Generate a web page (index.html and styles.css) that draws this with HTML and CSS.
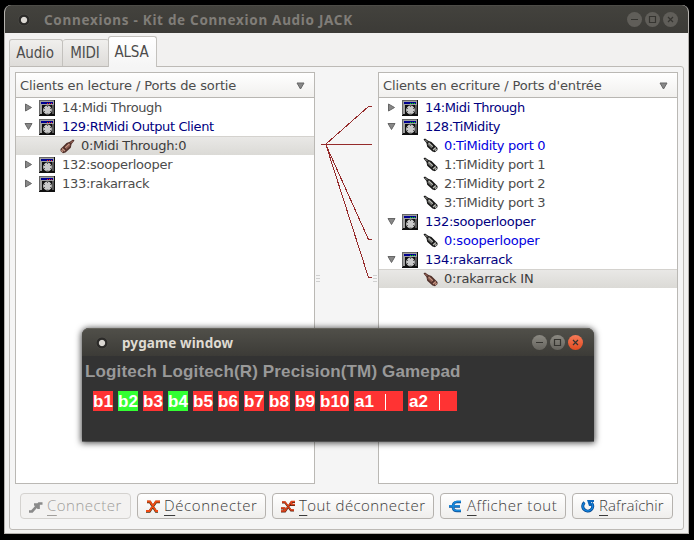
FILE: index.html
```html
<!DOCTYPE html>
<html lang="fr">
<head>
<meta charset="utf-8">
<title>Connexions - Kit de Connexion Audio JACK</title>
<link rel="stylesheet" href="styles.css">
</head>
<body>
<svg class="defs" width="0" height="0" aria-hidden="true">
  <defs>
    <symbol id="closed" viewBox="0 0 8 9"><path d="M1 1L7 4.5L1 8Z" fill="#888" stroke="#666" stroke-width="1"/></symbol>
    <symbol id="open" viewBox="0 0 9 8"><path d="M1 1H8L4.5 7Z" fill="#888" stroke="#666" stroke-width="1"/></symbol>
    <symbol id="device" viewBox="0 0 16 16">
      <path d="M0 0H16V16H0Z" fill="#101010"/>
      <path d="M0 0H15V1H1V15H0Z" fill="#666"/>
      <path d="M1 1H15V5H1ZM1 5H3V14H1ZM13.5 5H14.5V14H13.5Z" fill="#a0a0a0"/>
      <path d="M2 2H14V4H2Z" fill="#000090"/>
      <path d="M8 3H9V4H8ZM10 3H11V4H10ZM12 3H13V4H12Z" fill="currentColor"/>
      <circle cx="8.5" cy="10" r="4.4" fill="#cacaca"/>
      <path d="M7.5 13.5h2V15h-2z" fill="#555"/>
      <path d="M8 6h1v1H8zM5 8h1v1H5zM11 8h1v1h-1zM5 11h1v1H5zM11 11h1v1h-1z" fill="#555"/>
    </symbol>
    <symbol id="plug" viewBox="0 0 15 15">
      <path d="M.5 1.5L2 .5L5.2 2.8L8.5 4L14.5 10V12L12 14.3L9.5 13.6L4.2 8.8L3.4 5Z" class="plug-edge"/>
      <path d="M2 2L4.5 4M4.8 6L9 10" class="plug-mid"/>
      <path d="M5.5 4.8L9.8 8.8" class="plug-light"/>
      <path d="M10 12L12.8 9.6M12 12.8L13.6 11.2" class="plug-light"/>
    </symbol>
  </defs>
</svg>
<main class="window">
  <header class="titlebar"><i class="orb"></i><h1 class="caption">Connexions - Kit de Connexion Audio JACK</h1>
    <div class="controls">
      <svg class="ctl" viewBox="0 0 15 15"><path d="M4 7.5H11"/></svg>
      <svg class="ctl" viewBox="0 0 15 15"><path d="M4.5 4.5H10.5V10.5H4.5Z"/></svg>
      <svg class="ctl" viewBox="0 0 15 15"><path d="M5 5L10 10M10 5L5 10"/></svg>
    </div>
  </header>
  <nav class="tabs"><span class="tab audio"><b>Audio</b></span><span class="tab midi"><b>MIDI</b></span><span class="tab active"><b>ALSA</b></span></nav>
  <section class="pane">
    <div class="lists">
      <div class="list">
        <div class="head"><span class="h-out">Clients en lecture / Ports de sortie</span><svg class="sort"><use href="#open"/></svg></div>
        <div class="row wide"><svg class="arrow"><use href="#closed"/></svg><svg class="dev out"><use href="#device"/></svg><span>14:Midi Through</span></div>
        <div class="row wide navy"><svg class="arrow"><use href="#open"/></svg><svg class="dev out"><use href="#device"/></svg><span>129:RtMidi Output Client</span></div>
        <div class="row port selected"><svg class="plug brown flip"><use href="#plug"/></svg><span>0:Midi Through:0</span></div>
        <div class="row"><svg class="arrow"><use href="#closed"/></svg><svg class="dev out"><use href="#device"/></svg><span>132:sooperlooper</span></div>
        <div class="row"><svg class="arrow"><use href="#closed"/></svg><svg class="dev out"><use href="#device"/></svg><span>133:rakarrack</span></div>
      </div>
      <svg class="wires" viewBox="315 72 63 412">
        <g fill="none" stroke="#952b2b" shape-rendering="crispEdges"><path d="M321 144.5H372"/><path d="M326 144L368.5 106.5H372"/><path d="M326 145L368.5 239.5H372"/><path d="M326 145L368.5 277.5H372"/></g>
        <path d="M316 275.5h4M316 278.5h4M316 281.5h4M373 275.5h4M373 278.5h4M373 281.5h4" stroke="#d0d0d0"/>
      </svg>
      <div class="list">
        <div class="head"><span class="h-in">Clients en ecriture / Ports d'entrée</span><svg class="sort"><use href="#open"/></svg></div>
        <div class="row wide navy"><svg class="arrow"><use href="#closed"/></svg><svg class="dev in"><use href="#device"/></svg><span>14:Midi Through</span></div>
        <div class="row wide navy"><svg class="arrow"><use href="#open"/></svg><svg class="dev in"><use href="#device"/></svg><span>128:TiMidity</span></div>
        <div class="row port blue"><svg class="plug"><use href="#plug"/></svg><span>0:TiMidity port 0</span></div>
        <div class="row port"><svg class="plug"><use href="#plug"/></svg><span>1:TiMidity port 1</span></div>
        <div class="row port"><svg class="plug"><use href="#plug"/></svg><span>2:TiMidity port 2</span></div>
        <div class="row port"><svg class="plug"><use href="#plug"/></svg><span>3:TiMidity port 3</span></div>
        <div class="row navy"><svg class="arrow"><use href="#open"/></svg><svg class="dev in"><use href="#device"/></svg><span>132:sooperlooper</span></div>
        <div class="row port blue"><svg class="plug"><use href="#plug"/></svg><span class="loose">0:sooperlooper</span></div>
        <div class="row navy"><svg class="arrow"><use href="#open"/></svg><svg class="dev in"><use href="#device"/></svg><span>134:rakarrack</span></div>
        <div class="row port selected"><svg class="plug brown"><use href="#plug"/></svg><span class="loose">0:rakarrack IN</span></div>
      </div>
    </div>
    <footer class="actions">
      <button class="btn connect" disabled><svg class="ico" viewBox="0 0 14 13"><path d="M0 11.5H3L10 3.5H13.5M5 4.5H9.5V9" stroke="#8a8a8a" stroke-width="2.7"/></svg><span><u>C</u>onnecter</span></button>
      <button class="btn disconnect"><svg class="ico" viewBox="0 0 14 13"><path d="M1 2H4L10 11.5H12M0 11.5H3.5L10 2H14" stroke="#431" stroke-width="2.4"/><path d="M1 1.5H4L10 11H12M0 11H3.5L10 1.5H14" stroke="#f04a13" stroke-width="1.8"/></svg><span><u>D</u>éconnecter</span></button>
      <button class="btn all"><svg class="ico" viewBox="0 0 14 13"><path d="M1 2.5H4L10 10.5H13M0 11.5H4L10.5 2H14M0 8.5H3.5V11.5M14 5H10.5V2" stroke="#521" stroke-width="2"/><path d="M1 2H4L10 10H13M0 11H4L10.5 1.5H14M0 8H3.5V11M14 4.5H10.5V2" stroke="#e0421a" stroke-width="1.3"/></svg><span><u>T</u>out déconnecter</span></button>
      <button class="btn expand"><svg class="ico" viewBox="0 0 14 13"><path d="M0 6.5H11M12 2H8Q4 2 4 6.5T8 11H12" stroke="#135499" stroke-width="2.6"/><path d="M0 6H11M12 1.5H8Q4 2 4 6.5T8 10.5H12" stroke="#168bdf" stroke-width="1.5"/></svg><span><u>A</u>fficher tout</span></button>
      <button class="btn refresh"><svg class="ico" viewBox="0 0 14 13"><path d="M3.5 2.5A5 4.8 0 1 0 10.5 3" stroke="#07458c" stroke-width="3"/><path d="M3.5 2.5A5 4.8 0 1 0 10.5 3" stroke="#1283dc" stroke-width="1.5"/><path d="M6 0H13V2H10V6H8Z" fill="#0b66bb"/></svg><span><u>R</u>afraîchir</span></button>
    </footer>
  </section>
</main>
<aside class="pygame">
  <header class="titlebar"><i class="orb"></i><h2 class="caption">pygame window</h2>
    <div class="controls">
      <svg class="ctl" viewBox="0 0 15 15"><path d="M4 7.5H11"/></svg>
      <svg class="ctl" viewBox="0 0 15 15"><path d="M4.5 4.5H10.5V10.5H4.5Z"/></svg>
      <svg class="ctl close" viewBox="0 0 15 15"><path d="M5 5L10 10M10 5L5 10"/></svg>
    </div>
  </header>
  <p class="pad">Logitech Logitech(R) Precision(TM) Gamepad</p>
  <div class="keys"><span class="key">b1</span><span class="key on">b2</span><span class="key">b3</span><span class="key on">b4</span><span class="key">b5</span><span class="key w21">b6</span><span class="key">b7</span><span class="key w21">b8</span><span class="key">b9</span><span class="key ten">b10</span><span class="key axis">a1<i></i></span><span class="key axis">a2<i></i></span></div>
</aside>
</body>
</html>
```
FILE: styles.css
```css
* { box-sizing: border-box; }
body { margin: 0; width: 694px; height: 540px; overflow: hidden; background: #000; font-family: "DejaVu Sans", sans-serif; font-size: 13px; color: #4c4c4c; }
.defs { position: absolute; }
svg { display: block; flex: none; }
.window { width: 685px; height: 529px; margin: 5px 0 0 4px; background: #f2f1f0; border: 1px solid #b5b2ae; border-top: 0; border-radius: 7px 7px 0 0; overflow: hidden; }
.titlebar { height: 28px; margin: 0 -1px; display: flex; align-items: center; background: linear-gradient(#43423d, #3c3b37); border-top: 1px solid #4d4c47; padding: 0 11px 0 14px; color: #807d78; }
.orb { width: 12px; height: 12px; border-radius: 50%; background: radial-gradient(circle, #dad7d2 0 2.7px, #2b2a28 3.6px 5px, #504f4a 6px); flex: none; }
.caption { margin: 0 auto 0 14px; font: bold 13.5px/20px "Noto Sans", sans-serif; white-space: nowrap; letter-spacing: .7px; }
.controls { display: flex; gap: 3px; }
.ctl { width: 15px; height: 15px; border-radius: 50%; background: #605e59; fill: none; stroke: #353430; stroke-width: 1.2; }
.tabs { height: 33px; padding: 4px 0 0 4px; display: flex; align-items: flex-end; }
.tab { height: 27px; border: 1px solid #c3c1bd; border-bottom: 0; background: linear-gradient(#f0efed, #dedcd9); border-radius: 3px 3px 0 0; font: 15px/27px "DejaVu Sans Condensed", "DejaVu Sans", sans-serif; letter-spacing: -.15px; text-align: center; white-space: nowrap; padding-right: 2px; }
.tab b { font-weight: normal; }
.tab.audio { width: 54px; }
.tab.midi { width: 46px; border-left: 0; border-right: 0; }
.tab.active { height: 31px; width: 49px; margin: 0 0 -1px -1px; background: linear-gradient(#fff, #f5f5f5); line-height: 30px; position: relative; }
.pane { width: 675px; height: 464px; margin-left: 4px; border: 1px solid #bdbab6; border-radius: 0 3px 3px 3px; background: #f5f5f5; padding: 5px 5px 0; }
.lists { display: flex; height: 412px; }
.list { width: 300px; border: 1px solid #bab8b4; background: #fff; }
.wires { width: 63px; height: 412px; }
.head { height: 25px; border-bottom: 1px solid #b8b6b2; background: linear-gradient(#fff, #f1f0ee); display: flex; align-items: center; justify-content: space-between; padding: 1px 9px 0 4px; white-space: nowrap; }
.h-out, .h-in { letter-spacing: -.12px; }
.row { height: 19px; display: flex; align-items: center; padding-left: 8px; white-space: nowrap; letter-spacing: -.27px; }
.wide { letter-spacing: -.39px; }
.loose { letter-spacing: -.18px; }
.row span, .head span { line-height: 18px; }
.arrow { width: 9px; height: 9px; margin-right: 6px; }
.sort { width: 9px; height: 8px; }
.dev { width: 16px; height: 16px; margin: 1px 7px 0 0; }
.dev.out { color: #f02020; }
.dev.in { color: #00e800; }
.port { padding-left: 44px; letter-spacing: -.31px; }
.plug { width: 15px; height: 15px; margin-right: 6px; }
.flip { transform: scaleX(-1); }
.plug-edge { fill: var(--edge, #171717); }
.plug-mid { stroke: var(--mid, #70706c); stroke-width: 1.3; }
.plug-light { stroke: var(--light, #b9bab4); stroke-width: 1.4; }
.brown { --edge: #51302a; --mid: #8c5d51; --light: #c79582; }
.navy { color: #000080; }
.blue { color: #0000e0; }
.selected { background: linear-gradient(#e9e8e6, #dbdad6); border-top: 1px solid #d4d2ce; color: #3c3c3c; }
.actions { display: flex; gap: 6px; padding: 9px 0 0 5px; }
.btn { height: 26px; display: flex; align-items: center; border: 1px solid #b5b2ae; border-radius: 4px; background: linear-gradient(#fff, #efeeec); padding: 0 0 0 8px; color: #3c3c3c; font: 300 15px/20px "Open Sans", sans-serif; letter-spacing: .2px; white-space: nowrap; }
.btn span { margin-top: -2px; }
.btn u { text-underline-offset: 4px; text-decoration-thickness: 1px; }
.ico { width: 14px; height: 13px; margin-right: 4px; fill: none; }
.connect { width: 111px; color: #a09e9b; border-color: #d4d2cf; background: #f3f2f1; letter-spacing: .5px; }
.disconnect { width: 129px; letter-spacing: .6px; }
.all { width: 162px; letter-spacing: .42px; }
.expand { width: 126px; letter-spacing: .55px; }
.refresh { width: 101px; letter-spacing: .1px; }
.pygame { position: absolute; left: 82px; top: 328px; width: 512px; height: 113px; background: #333; border-radius: 7px 7px 0 0; box-shadow: 0 1px 6px 1px rgba(0,0,0,.7), 0 1px 0 #999; }
.pygame .titlebar { margin: 0; border-radius: 7px 7px 0 0; background: linear-gradient(#504f49, #3c3b37); border-top-color: #65635c; color: #dfdbd2; }
.pygame .caption { letter-spacing: .1px; }
.pygame .ctl { background: linear-gradient(#8b8982, #66645e); }
.pygame .close { background: linear-gradient(#f77b58, #df4a20); }
.pad { margin: 5px 0 0 3px; height: 21px; font: bold 17px/21px "Liberation Sans", sans-serif; color: #999; letter-spacing: .15px; white-space: nowrap; }
.keys { display: flex; gap: 5px; padding: 9px 0 0 11px; }
.key { width: 20px; height: 20px; background: #f33; color: #fff; font: bold 17px/21px "Liberation Sans", sans-serif; white-space: nowrap; display: flex; }
.on { background: #3f3; }
.w21 { width: 21px; }
.ten { width: 29px; }
.axis { width: 49px; padding-left: 1px; }
.axis i { width: 1px; height: 16px; background: #fff; margin: 3px 0 0 11px; }
```
